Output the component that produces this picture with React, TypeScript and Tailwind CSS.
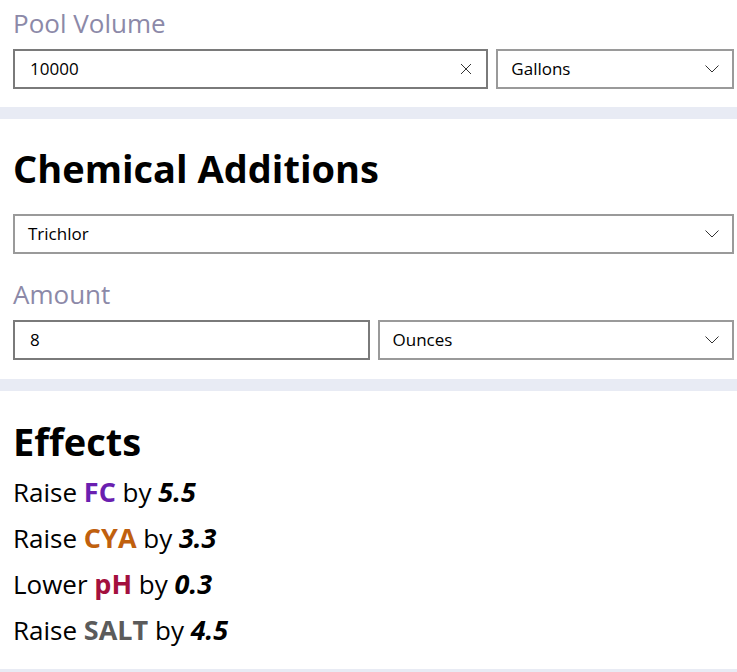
import React from 'react';

const font = { fontFamily: '"Open Sans", "Noto Sans", sans-serif' };

const Chevron: React.FC = () => (
  <svg width="14" height="8" viewBox="0 0 14 8" className="text-[#333]">
    <path d="M0.5 0.5 L7 7 L13.5 0.5" fill="none" stroke="currentColor" strokeWidth="1" />
  </svg>
);

const Select: React.FC<{ value: string }> = ({ value }) => (
  <div className="h-10 border-2 border-[#9a9a9a] bg-white flex items-center justify-between pl-[13px] pr-[13px] text-[17px] text-black">
    <span>{value}</span>
    <Chevron />
  </div>
);

const Input: React.FC<{ value: string; clear?: boolean }> = ({ value, clear }) => (
  <div className="h-10 border-2 border-[#7a7a7a] bg-white flex items-center justify-between pl-[15px] pr-[14px] text-[17px] text-black">
    <span>{value}</span>
    {clear && (
      <svg width="12" height="12" viewBox="0 0 12 12" className="text-[#333]">
        <path d="M1 1 L11 11 M11 1 L1 11" fill="none" stroke="currentColor" strokeWidth="1" />
      </svg>
    )}
  </div>
);

const Sep: React.FC = () => <div className="h-3 bg-[#e8ebf4]" />;

const effects = [
  { verb: 'Raise', what: 'FC', color: 'text-[#6a1fb0]', by: '5.5' },
  { verb: 'Raise', what: 'CYA', color: 'text-[#c0600e]', by: '3.3' },
  { verb: 'Lower', what: 'pH', color: 'text-[#a3103e]', by: '0.3' },
  { verb: 'Raise', what: 'SALT', color: 'text-[#5b5b5b]', by: '4.5' },
];

export default function App() {
  return (
    <div className="w-[737px] h-[672px] overflow-hidden bg-white text-black" style={font}>
      <div className="pl-[13px] pr-[3px] pt-[5px] pb-[18px]">
        <div className="text-[26px] text-[#8c89a8] leading-[36px] mb-[8px]">Pool Volume</div>
        <div className="grid grid-cols-[2fr_1fr] gap-2">
          <Input value="10000" clear />
          <Select value="Gallons" />
        </div>
      </div>
      <Sep />
      <div className="pl-[13px] pr-[3px] pt-[23px] pb-[19px]">
        <h2 className="text-[38px] font-bold leading-[52px] mb-[20px]">Chemical Additions</h2>
        <Select value="Trichlor" />
        <div className="text-[26px] text-[#8c89a8] leading-[36px] mt-[22px] mb-[8px]">Amount</div>
        <div className="grid grid-cols-2 gap-2">
          <Input value="8" />
          <Select value="Ounces" />
        </div>
      </div>
      <Sep />
      <div className="pl-[13px] pr-[3px] pt-[24px] pb-[16px]">
        <h2 className="text-[38px] font-bold leading-[52px] mb-[2px]">Effects</h2>
        {effects.map((e) => (
          <div key={e.what} className="text-[26px] leading-[46px]">
            {e.verb} <span className={`font-bold text-[27px] ${e.color}`}>{e.what}</span> by{' '}
            <span className="font-bold italic text-[27px]">{e.by}</span>
          </div>
        ))}
      </div>
      <Sep />
    </div>
  );
}
